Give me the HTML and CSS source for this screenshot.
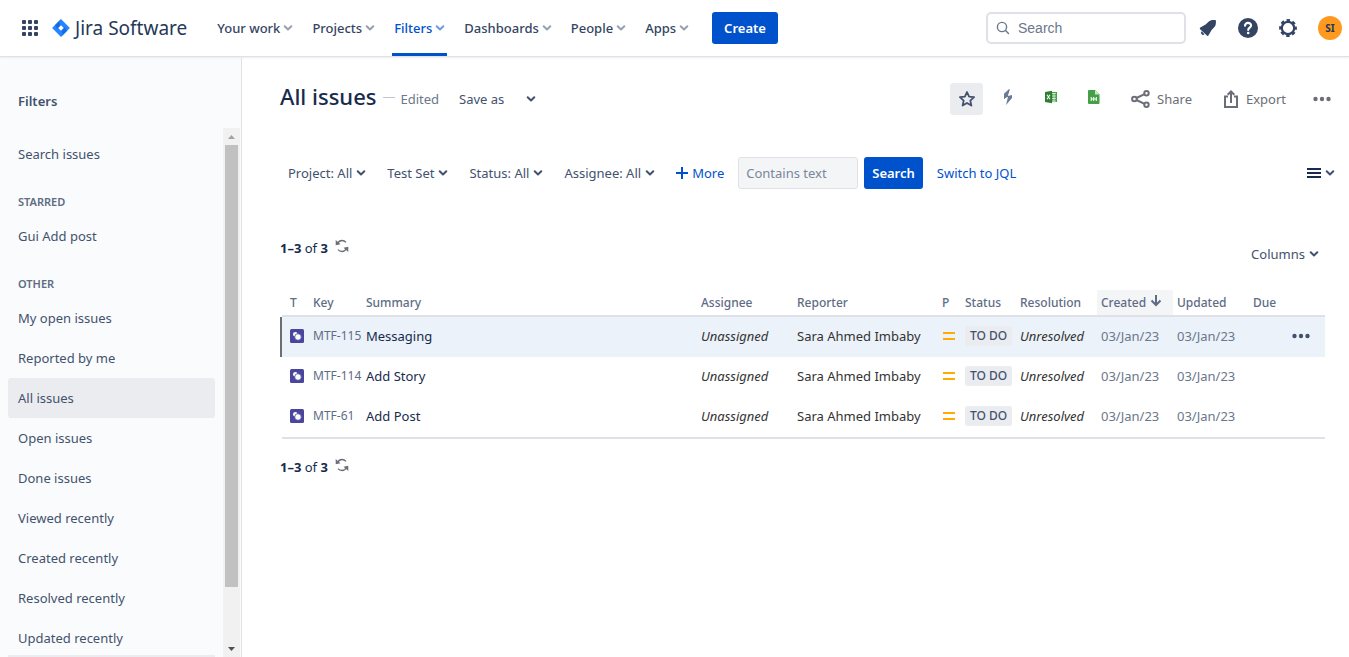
FILE: index.html
```html
<!DOCTYPE html>
<html lang="en">
<head>
<meta charset="utf-8">
<title>All issues - Jira Software</title>
<link rel="stylesheet" href="styles.css">
</head>
<body>
<svg class="sprite" aria-hidden="true">
  <symbol id="chevron" viewBox="0 0 10 8"><path d="M1.7 2.2 5 5.5 8.3 2.2" fill="none" stroke="currentColor" stroke-width="2" stroke-linecap="round" stroke-linejoin="round"/></symbol>
  <symbol id="refresh" viewBox="0 0 14 14"><g fill="none" stroke="currentColor" stroke-width="1.3"><path d="M2.500 4.500C3.500 2.600 5 1.500 7 1.500c1.700 0 3 .7 4 1.900"/><path d="M11.500 9.500C10.500 11.400 9 12.500 7 12.500c-1.700 0-3-.7-4-1.900"/></g><path d="M.7 1v5.200l4.800-1zM13.300 13V7.800l-4.800 1z" fill="currentColor"/></symbol>
  <symbol id="testset" viewBox="0 0 14 14"><rect width="14" height="14" rx="1.500" fill="#4a459d"/><circle cx="5.300" cy="5.300" r="2.300" fill="#fff"/><circle cx="8" cy="8" r="3.300" fill="#fff" stroke="#4a459d" stroke-width=".8"/></symbol>
  <symbol id="medium" viewBox="0 0 12 8"><path d="M0 0h12v2H0zM0 6h12v2H0z" fill="#ffab00"/></symbol>
  <symbol id="dots" viewBox="0 0 18 6"><g fill="currentColor"><circle cx="2.500" cy="3" r="2.200"/><circle cx="9" cy="3" r="2.200"/><circle cx="15.500" cy="3" r="2.200"/></g></symbol>
</svg>

<header class="topbar">
  <button class="icon-btn" aria-label="Switch to"><svg width="16" height="16" viewBox="0 0 16 16" fill="#344563"><rect width="4" height="4" rx="1"/><rect x="6" width="4" height="4" rx="1"/><rect x="12" width="4" height="4" rx="1"/><rect y="6" width="4" height="4" rx="1"/><rect x="6" y="6" width="4" height="4" rx="1"/><rect x="12" y="6" width="4" height="4" rx="1"/><rect y="12" width="4" height="4" rx="1"/><rect x="6" y="12" width="4" height="4" rx="1"/><rect x="12" y="12" width="4" height="4" rx="1"/></svg></button>
  <a class="logo" href="#"><svg width="18" height="18" viewBox="0 0 18 18"><path d="M9 0l8.400 8.400a.8.8 0 0 1 0 1.200L9 18 .6 9.600a.8.8 0 0 1 0-1.200z" fill="#2684ff"/><path d="M9 0c-2 2-2 4.700 0 6.300L5.300 10 2.900 6.100zM9 18c2-2 2-4.700 0-6.300L12.700 8l2.400 3.900z" fill="#0b5fdb" opacity=".65"/><path d="M9 6.300 11.700 9 9 11.700 6.300 9z" fill="#fff"/></svg><span>Jira Software</span></a>
  <nav class="nav">
    <button class="nav-item">Your work<svg class="chev"><use href="#chevron"/></svg></button>
    <button class="nav-item">Projects<svg class="chev"><use href="#chevron"/></svg></button>
    <button class="nav-item nav-active">Filters<svg class="chev"><use href="#chevron"/></svg></button>
    <button class="nav-item">Dashboards<svg class="chev"><use href="#chevron"/></svg></button>
    <button class="nav-item">People<svg class="chev"><use href="#chevron"/></svg></button>
    <button class="nav-item">Apps<svg class="chev"><use href="#chevron"/></svg></button>
  </nav>
  <button class="primary">Create</button>
  <div class="tools">
    <label class="search"><svg width="14" height="14" viewBox="0 0 14 14" fill="none" stroke="#6b778c" stroke-width="1.400" stroke-linecap="round"><circle cx="6" cy="6" r="4.600"/><path d="m9.500 9.500 3 3"/></svg><input type="search" placeholder="Search" aria-label="Search Jira"></label>
    <button class="icon-btn" aria-label="Notifications"><svg width="18" height="18" viewBox="0 0 18 18" fill="#344563"><path d="M.9 9.900c-.3-.5-.1-1 .4-1.300L6.600 5.600 9.300 2.900C11 1.200 13.200.8 16.200 1c.4 0 .7.300.7.700.2 3-.2 5.200-1.900 6.900l-2.400 2.500-3.200 5.500c-.3.500-.9.600-1.300.2z"/><path d="M2.600 12.300l2.900 2.900a2 2 0 0 1-2.900-2.900z"/></svg></button>
    <button class="icon-btn" aria-label="Help"><svg width="20" height="20" viewBox="0 0 20 20"><circle cx="10" cy="10" r="10" fill="#344563"/><path d="M7 7.800C7 6 8.200 4.900 10 4.900s3.100 1.100 3.100 2.700c0 2-2.900 2.200-2.900 4.400" fill="none" stroke="#fff" stroke-width="2.100" stroke-linecap="round"/><circle cx="10.200" cy="15" r="1.300" fill="#fff"/></svg></button>
    <button class="icon-btn" aria-label="Settings"><svg width="18" height="18" viewBox="0 0 18 18" fill="none" stroke="#344563"><circle cx="9" cy="9" r="7.700" stroke-width="2.400" stroke-dasharray="3.400 2.648" stroke-dashoffset="1.700"/><circle cx="9" cy="9" r="6.200" stroke-width="2.200"/></svg></button>
    <button class="avatar" aria-label="Your profile">SI</button>
  </div>
</header>

<div class="page">
  <aside class="sidebar">
    <h2 class="side-title">Filters</h2>
    <div class="side-body">
      <nav class="side-list">
        <div class="side-links">
          <a class="side-link" href="#">Search issues</a>
          <h3 class="side-group">STARRED</h3>
          <a class="side-link" href="#">Gui Add post</a>
          <h3 class="side-group">OTHER</h3>
          <a class="side-link" href="#">My open issues</a>
          <a class="side-link" href="#">Reported by me</a>
          <a class="side-link side-current" href="#">All issues</a>
          <a class="side-link" href="#">Open issues</a>
          <a class="side-link" href="#">Done issues</a>
          <a class="side-link" href="#">Viewed recently</a>
          <a class="side-link" href="#">Created recently</a>
          <a class="side-link" href="#">Resolved recently</a>
          <a class="side-link" href="#">Updated recently</a>
        </div>
        <div class="side-rule"></div>
      </nav>
      <div class="scrollbar" aria-hidden="true">
        <svg width="17" height="17" viewBox="0 0 17 17"><path d="M8.500 7 12 11H5z" fill="#a3a3a3"/></svg>
        <div class="thumb"></div>
        <svg width="17" height="17" viewBox="0 0 17 17"><path d="M8.500 11 12 7H5z" fill="#505050"/></svg>
      </div>
    </div>
  </aside>

  <main class="main">
    <div class="title-row">
      <h1>All issues</h1>
      <span class="dash"></span>
      <span class="edited">Edited</span>
      <button class="text-btn save">Save as</button>
      <button class="text-btn" aria-label="More save options"><svg class="chev"><use href="#chevron"/></svg></button>
      <div class="actions">
        <button class="star" aria-label="Star filter"><svg width="18" height="18" viewBox="0 0 18 18" fill="none" stroke="#42526e" stroke-width="1.800" stroke-linejoin="round"><path d="m9 2 2.100 4.700 5 .5-3.800 3.400 1.100 5L9 13l-4.400 2.600 1.100-5L1.900 7.200l5-.5z"/></svg></button>
        <button class="icon-btn" aria-label="Automation"><svg width="10" height="16" viewBox="0 0 10 16"><path d="M7 0 1 5v5l3-2.500z" fill="#344563"/><path d="M6 0 1 5v4l4-1-2 8 6-7V6L5 7z" fill="#6b7b95"/></svg></button>
        <button class="icon-btn" aria-label="Open in Microsoft Excel"><svg width="14" height="14" viewBox="0 0 14 14"><path d="M7 2h6v10H7z" fill="#43a047"/><path d="M8 3.500h4M8 6h4M8 8.500h4M8 11h4M10 3v9" stroke="#e5f3e5" stroke-width=".8"/><path d="M1 2 8 .8v12.400L1 12z" fill="#2e7d32"/><path d="m3 4.700 3 4.600M6 4.700 3 9.300" stroke="#fff" stroke-width="1.100"/></svg></button>
        <button class="icon-btn" aria-label="Open in Google Sheets"><svg width="12" height="14" viewBox="0 0 12 14"><path d="M1 0h6l4.500 4.500V13a1 1 0 0 1-1 1H1a1 1 0 0 1-1-1V1a1 1 0 0 1 1-1z" fill="#43a047"/><path d="m7 0 4.500 4.500H7z" fill="#c8e6c9"/><path d="M3.200 7v4M5.700 7v4M8.300 7v4M3 9h5.500" stroke="#fff" stroke-width="1"/></svg></button>
        <button class="text-btn share"><svg width="19" height="18" viewBox="0 0 19 18" fill="none" stroke="#6b6e76" stroke-width="2"><circle cx="3.400" cy="9" r="2.300"/><circle cx="15.500" cy="3.200" r="2.200"/><circle cx="15.500" cy="14.800" r="2.200"/><path d="m5.500 8 8-3.800M5.500 10l8 3.800"/></svg>Share</button>
        <button class="text-btn share"><svg width="16" height="18" viewBox="0 0 16 18" fill="none" stroke="#6b6e76" stroke-width="2"><path d="M5 6.500H2V17h12V6.500h-3M8 13V2M4.700 4.800 8 1.500l3.300 3.300"/></svg>Export</button>
        <button class="icon-btn more" aria-label="More actions"><svg width="18" height="6"><use href="#dots"/></svg></button>
      </div>
    </div>

    <form class="filter-row">
      <button type="button" class="text-btn">Project: All<svg class="chev"><use href="#chevron"/></svg></button>
      <button type="button" class="text-btn">Test Set<svg class="chev"><use href="#chevron"/></svg></button>
      <button type="button" class="text-btn">Status: All<svg class="chev"><use href="#chevron"/></svg></button>
      <button type="button" class="text-btn">Assignee: All<svg class="chev"><use href="#chevron"/></svg></button>
      <button type="button" class="text-btn add"><svg width="12" height="12" viewBox="0 0 12 12"><path d="M6 0v12M0 6h12" stroke="#0052cc" stroke-width="2"/></svg>More</button>
      <input class="contains" type="text" placeholder="Contains text" aria-label="Contains text">
      <button type="button" class="primary">Search</button>
      <a class="jql" href="#">Switch to JQL</a>
      <button type="button" class="text-btn view" aria-label="Change view"><svg width="14" height="12" viewBox="0 0 14 12"><path d="M0 2h14M0 6h14M0 10h14" stroke="#172b4d" stroke-width="2"/></svg><svg class="chev"><use href="#chevron"/></svg></button>
    </form>

    <div class="count-row">
      <p class="count"><span><b>1–3</b> of <b>3</b></span><button class="icon-btn" aria-label="Refresh results"><svg width="14" height="14"><use href="#refresh"/></svg></button></p>
      <button class="text-btn columns">Columns<svg class="chev"><use href="#chevron"/></svg></button>
    </div>

    <table class="issues">
      <colgroup><col class="c-type"><col class="c-key"><col><col class="c-assignee"><col class="c-reporter"><col class="c-priority"><col class="c-status"><col class="c-resolution"><col class="c-date"><col class="c-date"><col class="c-due"><col class="c-actions"></colgroup>
      <thead>
        <tr><th class="type">T</th><th>Key</th><th>Summary</th><th>Assignee</th><th>Reporter</th><th>P</th><th>Status</th><th>Resolution</th><th class="sorted">Created<svg width="12" height="12" viewBox="0 0 12 12" fill="none" stroke="#5e6c84" stroke-width="2"><path d="M6 0v10M1.500 5.500 6 10l4.500-4.500"/></svg></th><th>Updated</th><th>Due</th><th></th></tr>
      </thead>
      <tbody>
        <tr class="selected"><td class="type"><svg width="14" height="14"><use href="#testset"/></svg></td><td><a class="key" href="#">MTF-115</a></td><td><a class="summary" href="#">Messaging</a></td><td><em>Unassigned</em></td><td>Sara Ahmed Imbaby</td><td class="priority"><svg width="12" height="8"><use href="#medium"/></svg></td><td><span class="status">TO DO</span></td><td><em>Unresolved</em></td><td class="date">03/Jan/23</td><td class="date">03/Jan/23</td><td></td><td><button class="icon-btn row-more" aria-label="Issue actions"><svg width="18" height="6"><use href="#dots"/></svg></button></td></tr>
        <tr><td class="type"><svg width="14" height="14"><use href="#testset"/></svg></td><td><a class="key" href="#">MTF-114</a></td><td><a class="summary" href="#">Add Story</a></td><td><em>Unassigned</em></td><td>Sara Ahmed Imbaby</td><td class="priority"><svg width="12" height="8"><use href="#medium"/></svg></td><td><span class="status">TO DO</span></td><td><em>Unresolved</em></td><td class="date">03/Jan/23</td><td class="date">03/Jan/23</td><td></td><td></td></tr>
        <tr><td class="type"><svg width="14" height="14"><use href="#testset"/></svg></td><td><a class="key" href="#">MTF-61</a></td><td><a class="summary" href="#">Add Post</a></td><td><em>Unassigned</em></td><td>Sara Ahmed Imbaby</td><td class="priority"><svg width="12" height="8"><use href="#medium"/></svg></td><td><span class="status">TO DO</span></td><td><em>Unresolved</em></td><td class="date">03/Jan/23</td><td class="date">03/Jan/23</td><td></td><td></td></tr>
      </tbody>
    </table>

    <p class="count"><span><b>1–3</b> of <b>3</b></span><button class="icon-btn" aria-label="Refresh results"><svg width="14" height="14"><use href="#refresh"/></svg></button></p>
  </main>
</div>
</body>
</html>
```

FILE: styles.css
```css
* { box-sizing: border-box; }

body {
  margin: 0;
  height: 100vh;
  display: flex;
  flex-direction: column;
  overflow: hidden;
  background: #fff;
  color: #172b4d;
  font: 13px/20px "Noto Sans", sans-serif;
}

h1, h2, h3, p { margin: 0; }
a { color: inherit; text-decoration: none; }
svg { display: block; flex: none; }
button, input { font: inherit; }
button {
  border: 0;
  padding: 0;
  background: none;
  color: inherit;
  cursor: pointer;
  white-space: nowrap;
}
.sprite { position: absolute; width: 0; height: 0; }
.chev { width: 10px; height: 8px; }
.icon-btn { display: flex; align-items: center; justify-content: center; }

.primary {
  height: 32px;
  padding: 0 8px;
  border-radius: 3px;
  background: #0052cc;
  color: #fff;
  font-weight: 600;
}

/* Top bar */
.topbar {
  flex: none;
  height: 56px;
  display: flex;
  align-items: center;
  padding: 0 7px 0 22px;
  background: #fff;
  color: #344563;
  box-shadow: 0 1px 0 #dfe1e6, 0 2px 2px #ebecf0;
  position: relative;
}
.logo {
  display: flex;
  align-items: center;
  gap: 5px;
  margin-left: 14px;
  color: #253858;
  font: 19px/24px "Noto Sans", sans-serif;
  white-space: nowrap;
}
.nav {
  display: flex;
  align-self: stretch;
  gap: 15px;
  margin-left: 28px;
}
.nav-item {
  display: flex;
  align-items: center;
  gap: 3px;
  padding: 3px 2px 0;
  border-bottom: 3px solid transparent;
  font-weight: 500;
}
.nav-item .chev { color: #97a0af; }
.nav-active { color: #0052cc; border-color: #0052cc; }
.nav-active .chev { color: #6b9be0; }
.topbar .primary { margin-left: 21px; padding: 0 12px; }
.tools { display: flex; align-items: center; margin-left: auto; }
.tools .icon-btn { width: 40px; height: 32px; }
.search {
  display: flex;
  align-items: center;
  gap: 8px;
  width: 200px;
  height: 32px;
  margin-right: 2px;
  padding: 0 8px;
  border: 2px solid #dfe1e6;
  border-radius: 5px;
}
.search input {
  min-width: 0;
  flex: 1;
  padding: 0;
  border: 0;
  outline: 0;
  background: none;
  font: 14px/20px "Liberation Sans", sans-serif;
}
.search input::placeholder { color: #6b778c; opacity: 1; }
.avatar {
  width: 24px;
  height: 24px;
  margin-left: 10px;
  border-radius: 50%;
  background: #ff991f;
  color: #253858;
  font-size: 10px;
  font-weight: 700;
}

/* Sidebar */
.page { flex: 1; display: flex; min-height: 0; }
.sidebar {
  flex: none;
  width: 242px;
  display: flex;
  flex-direction: column;
  padding-right: 1px;
  border-right: 1px solid #dfe1e6;
  background: #fafbfc;
  color: #42526e;
}
.side-title {
  padding: 35px 18px 17px;
  font-size: 13px;
  line-height: 20px;
  font-weight: 600;
}
.side-body { flex: 1; display: flex; min-height: 0; }
.side-list {
  flex: 1;
  display: flex;
  flex-direction: column;
  padding: 6px 8px 0;
}
.side-links { flex: 1; min-height: 0; overflow: hidden; }
.side-rule { flex: none; height: 2px; background: #ebecf0; }
.side-link {
  display: block;
  padding: 10px;
  border-radius: 3px;
}
.side-current { background: #ebecf0; }
.side-group {
  padding: 20px 10px 6px;
  color: #5e6c84;
  font-size: 11px;
  line-height: 16px;
  font-weight: 600;
}
.scrollbar {
  flex: none;
  width: 17px;
  display: flex;
  flex-direction: column;
  background: #f1f1f1;
}
.thumb { flex: 1; margin: 0 2px 53px; background: #c1c1c1; }

/* Main */
.main { flex: 1; min-width: 0; padding: 27px 14px 0 38px; overflow: hidden; }
.text-btn {
  display: flex;
  align-items: center;
  gap: 4px;
  color: #42526e;
}
.title-row { display: flex; align-items: center; height: 32px; }
h1 { margin-bottom: 6px; font-size: 22px; line-height: 28px; font-weight: 500; }
.dash { width: 12px; height: 1px; margin: 0 5px 4px 7px; background: #c1c7d0; }
.edited { color: #6b778c; }
.save { margin: 0 22px 0 20px; }
.actions { display: flex; align-items: center; margin-left: auto; color: #6b6e76; }
.star {
  display: flex;
  align-items: center;
  justify-content: center;
  width: 33px;
  height: 32px;
  margin-right: 3px;
  border-radius: 3px;
  background: #ebecf0;
}
.actions .icon-btn { width: 43px; height: 32px; padding-bottom: 4px; }
.share { gap: 7px; margin-left: 16px; color: #6b6e76; }
.share + .share { margin-left: 31px; }
.actions .more { width: 18px; margin: 0 4px 0 27px; padding: 0; }

.filter-row { display: flex; align-items: center; margin-top: 42px; padding-left: 8px; }
.filter-row > .text-btn { margin-right: 21px; }
.filter-row > .add { margin-right: 14px; color: #0052cc; }
.contains {
  width: 120px;
  height: 32px;
  margin-right: 6px;
  padding: 0 7px;
  border: 1px solid #dfe1e6;
  border-radius: 3px;
  background: #f4f5f7;
}
.contains::placeholder { color: #7a869a; opacity: 1; }
.jql { margin-left: 14px; color: #0052cc; }
.filter-row > .view { margin: 0 0 0 auto; }

.count-row {
  display: flex;
  justify-content: space-between;
  align-items: flex-start;
  margin-top: 49px;
  padding-right: 16px;
}
.count { display: flex; align-items: center; gap: 7px; }
.count b { font-weight: 700; }
.count .icon-btn { padding-bottom: 4px; color: #6b6e76; }
.columns { margin-top: 6px; }

.issues {
  width: calc(100% - 12px);
  margin: 26px 10px 18px 2px;
  table-layout: fixed;
  border-collapse: separate;
  border-spacing: 0;
  border-bottom: 2px solid #dfe1e6;
}
.c-type { width: 27px; }
.c-key { width: 53px; }
.c-assignee { width: 96px; }
.c-reporter { width: 145px; }
.c-priority { width: 23px; }
.c-status { width: 55px; }
.c-resolution { width: 81px; }
.c-date { width: 76px; }
.c-due { width: 39px; }
.c-actions { width: 37px; }
th {
  height: 27px;
  padding: 0 4px;
  border-bottom: 2px solid #dfe1e6;
  color: #5e6c84;
  font-size: 12px;
  font-weight: 500;
  text-align: left;
  white-space: nowrap;
}
.sorted { background: #f4f5f7; }
.sorted svg { display: inline-block; margin-left: 4px; }
td { height: 40px; padding: 0 4px 3px; white-space: nowrap; color: #333; }
th.type, td.type { padding-left: 8px; }
.selected td { background: #ebf2f9; }
.selected td:first-child { box-shadow: -2px 0 0 #6b6e76; }
.key { color: #5e6c84; font-size: 12px; }
.summary { color: #172b4d; }
.priority svg { margin-left: 1px; }
.date { color: #6b778c; }
.status {
  display: inline-block;
  padding: 0 5px;
  border-radius: 3px;
  background: #ebecf0;
  color: #42526e;
  font-size: 12px;
  font-weight: 500;
  line-height: 20px;
}
.row-more { color: #42526e; }
```
